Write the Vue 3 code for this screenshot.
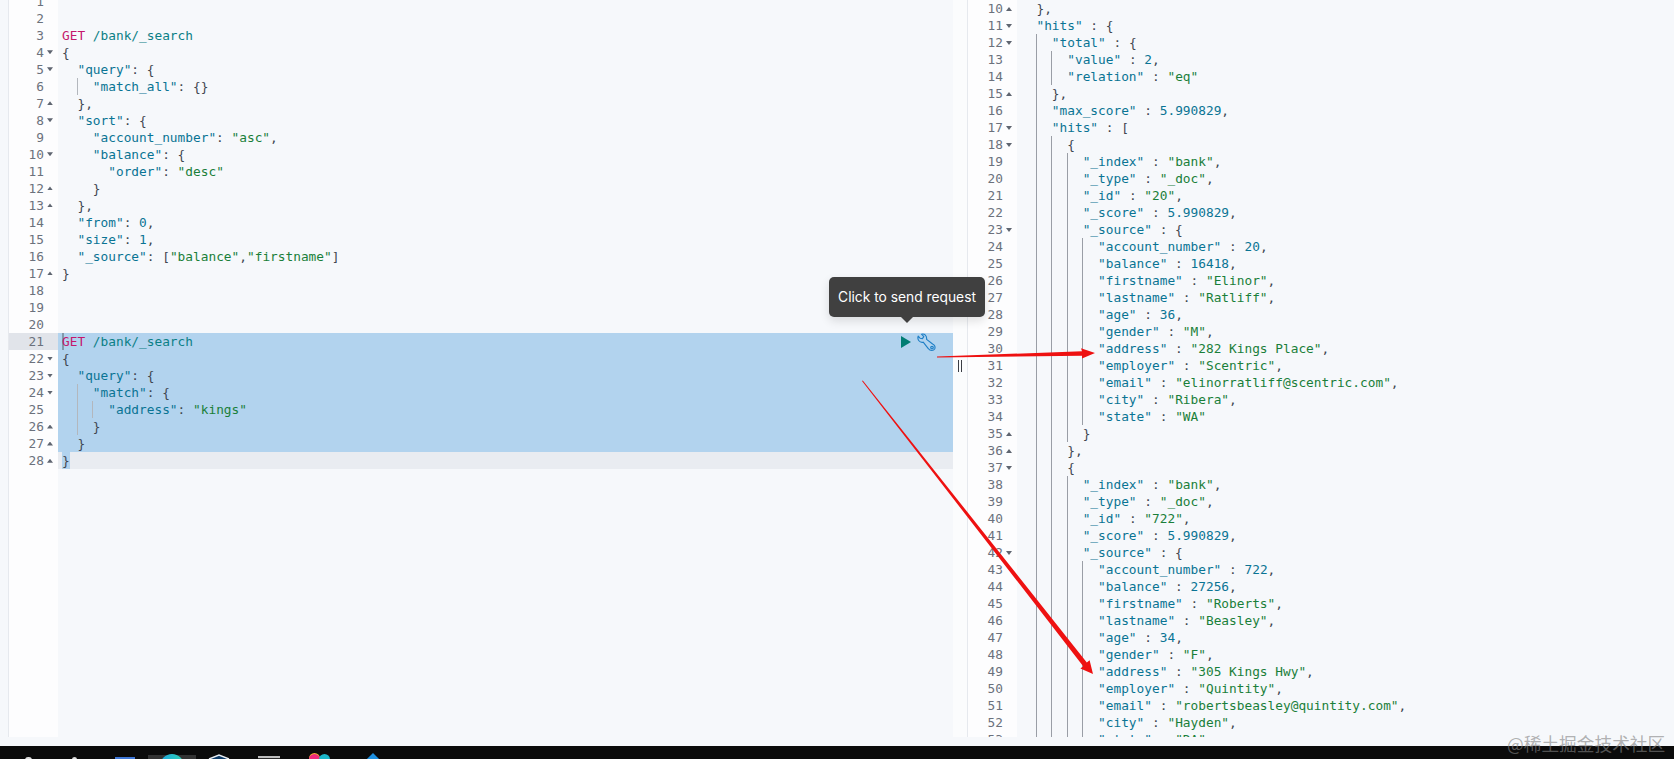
<script setup>
const tokenize = (s) => {
  const out = []
  const re = /("(?:[^"])*")(\s*:)?|(\b\d+(?:\.\d+)?\b)|([^"\d]+)/g
  let m
  while ((m = re.exec(s))) {
    if (m[1]) {
      out.push({ t: m[1], c: m[2] ? 'key' : 'str' })
      if (m[2]) out.push({ t: m[2], c: 'pun' })
    } else if (m[3]) out.push({ t: m[3], c: 'num' })
    else out.push({ t: m[4], c: 'pun' })
  }
  return out
}

const build = (rows, start, folds) =>
  rows.map((row, i) => {
    const n = start + i
    const text = row.s
    const indent = text.match(/^ */)[0].length
    const body = text.slice(indent)
    const tokens = body.startsWith('GET')
      ? [{ t: 'GET', c: 'method' }, { t: ' /bank/_search', c: 'url' }]
      : tokenize(body)
    return { n, indent, tokens, guides: row.g, fold: folds[n] || '' }
  })

const autoGuides = (s) => {
  const indent = s.match(/^ */)[0].length
  const g = []
  for (let c = 2; c < indent; c += 2) g.push(c)
  return g
}

const leftSrc = [
  '', '', 'GET /bank/_search', '{', '  "query": {', '    "match_all": {}', '  },', '  "sort": {',
  '    "account_number": "asc",', '    "balance": {', '      "order": "desc"', '    }', '  },',
  '  "from": 0,', '  "size": 1,', '  "_source": ["balance","firstname"]', '}', '', '', '',
  'GET /bank/_search', '{', '  "query": {', '    "match": {', '      "address": "kings"', '    }', '  }', '}'
]
const leftGuides = { 6: [2], 24: [2], 25: [2, 4], 26: [2] }
const leftRows = leftSrc.map((s, i) => ({ s, g: leftGuides[i + 1] || [] }))
const leftFolds = {
  4: 'd', 5: 'd', 7: 'u', 8: 'd', 10: 'd', 12: 'u', 13: 'u', 17: 'u',
  22: 'd', 23: 'd', 24: 'd', 26: 'u', 27: 'u', 28: 'u'
}
const leftLines = build(leftRows, 1, leftFolds)

const rightSrc = [
  '  },', '  "hits" : {', '    "total" : {', '      "value" : 2,', '      "relation" : "eq"', '    },',
  '    "max_score" : 5.990829,', '    "hits" : [', '      {',
  '        "_index" : "bank",', '        "_type" : "_doc",', '        "_id" : "20",', '        "_score" : 5.990829,',
  '        "_source" : {', '          "account_number" : 20,', '          "balance" : 16418,',
  '          "firstname" : "Elinor",', '          "lastname" : "Ratliff",', '          "age" : 36,',
  '          "gender" : "M",', '          "address" : "282 Kings Place",', '          "employer" : "Scentric",',
  '          "email" : "elinorratliff@scentric.com",', '          "city" : "Ribera",', '          "state" : "WA"',
  '        }', '      },', '      {',
  '        "_index" : "bank",', '        "_type" : "_doc",', '        "_id" : "722",', '        "_score" : 5.990829,',
  '        "_source" : {', '          "account_number" : 722,', '          "balance" : 27256,',
  '          "firstname" : "Roberts",', '          "lastname" : "Beasley",', '          "age" : 34,',
  '          "gender" : "F",', '          "address" : "305 Kings Hwy",', '          "employer" : "Quintity",',
  '          "email" : "robertsbeasley@quintity.com",', '          "city" : "Hayden",', '          "state" : "DA"'
]
const rightRows = rightSrc.map((s) => ({ s, g: autoGuides(s) }))
const rightFolds = { 10: 'u', 11: 'd', 12: 'd', 15: 'u', 17: 'd', 18: 'd', 23: 'd', 35: 'u', 36: 'u', 37: 'd', 42: 'd' }
const rightLines = build(rightRows, 10, rightFolds)

const isSelected = (n) => n >= 21 && n <= 27
</script>

<template>
  <div class="screen">
    <div class="workspace">
      <section class="pane pane-left">
        <div class="gutter">
          <div class="gutter-scroll left-scroll">
            <div v-for="l in leftLines" :key="l.n" class="gline" :class="{ 'gline-active': l.n === 21 }">
              <span class="num-label">{{ l.n }}</span>
              <span class="fold" :class="'fold-' + l.fold"></span>
            </div>
          </div>
        </div>
        <div class="code">
          <div class="code-scroll left-scroll">
            <div
              v-for="l in leftLines"
              :key="l.n"
              class="cline"
              :class="{ sel: isSelected(l.n), 'active-line': l.n === 28 }"
            >
              <span v-if="l.n === 28" class="sel-end"></span>
              <span v-if="l.n === 21" class="caret"></span>
              <span v-for="g in l.guides" :key="g" class="guide guide-soft" :style="{ left: g * 7.7 + 'px' }"></span>
              <span class="pre">{{ ' '.repeat(l.indent) }}</span><span
                v-for="(t, i) in l.tokens"
                :key="i"
                class="pre"
                :class="t.c"
              >{{ t.t }}</span>
            </div>
          </div>
          <div class="actions">
            <svg class="play" width="12" height="14" viewBox="0 0 12 14"><path d="M1 1 L11 7 L1 13 Z" fill="#017d73" /></svg>
            <svg class="wrench" width="19" height="19" viewBox="0 0 19 19" fill="none" stroke="#1f7fc6" stroke-width="1.15" stroke-linejoin="round">
              <path d="M4.5 1.2 L6.8 3.6 L5.4 5.6 L3 5.2 L1.2 3.2 C0 6.5 2.5 10 6.2 9.2 L11.5 15.8 C13 18 16.5 18 17.6 16 C18.6 14 17.6 11.8 15.6 11 L9.6 6.4 C10 3 7.6 .4 4.5 1.2 Z" />
              <circle cx="15" cy="14.6" r="1.3" />
            </svg>
          </div>
          <div class="tooltip">Click to send request</div>
        </div>
      </section>
      <div class="divider"><span class="grip"></span></div>
      <section class="pane pane-right">
        <div class="gutter">
          <div class="gutter-scroll right-scroll">
            <div v-for="l in rightLines" :key="l.n" class="gline">
              <span class="num-label">{{ l.n }}</span>
              <span class="fold" :class="'fold-' + l.fold"></span>
            </div>
          </div>
        </div>
        <div class="code">
          <div class="code-scroll right-scroll">
            <div v-for="l in rightLines" :key="l.n" class="cline">
              <span v-for="g in l.guides" :key="g" class="guide" :style="{ left: g * 7.7 + 'px' }"></span>
              <span class="pre">{{ ' '.repeat(l.indent) }}</span><span
                v-for="(t, i) in l.tokens"
                :key="i"
                class="pre"
                :class="t.c"
              >{{ t.t }}</span>
            </div>
          </div>
        </div>
      </section>
    </div>
    <div class="taskbar">
      <span class="tb tb-white1"></span>
      <span class="tb tb-white2"></span>
      <span class="tb tb-blue"></span>
      <span class="tb-active"><span class="tb-circle"></span></span>
      <svg class="tb-hex" width="22" height="6" viewBox="0 0 22 6"><path d="M1 5 L11 1 L21 5" fill="#0c3a66" stroke="#e8edf3" stroke-width="1.4" /></svg>
      <span class="tb tb-doc"></span>
      <span class="tb tb-multi"><i></i><i></i></span>
      <span class="tb tb-drop"></span>
    </div>
    <svg class="annot" width="1674" height="759" viewBox="0 0 1674 759">
      <polygon points="937,356.6 1082,351.2 1081,348.3 1095,353 1082,358.4 1082,355.8 937,357.6" fill="#ee1111" />
      <polygon points="862,381 862.8,380.4 1086.8,662.4 1089.6,660.2 1093,674 1080.4,668.4 1083.2,666.2" fill="#ee1111" />
    </svg>
    <div class="watermark">@稀土掘金技术社区</div>
  </div>
</template>

<style>
html, body { margin: 0; padding: 0; background: #f6f8fb; }
</style>

<style scoped>
.screen {
  position: relative;
  width: 1674px;
  height: 759px;
  overflow: hidden;
  background: #f6f8fb;
  display: flex;
  flex-direction: column;
  font-family: "DejaVu Sans Mono", "Liberation Mono", monospace;
  font-size: 12.8px;
}
.workspace {
  flex: 1;
  display: flex;
  min-height: 0;
  padding-bottom: 9px;
}
.pane {
  display: flex;
  position: relative;
  min-height: 0;
}
.pane-left {
  width: 945px;
  margin-left: 8px;
  z-index: 2;
}
.pane-right {
  flex: 1;
  overflow: hidden;
}
.divider {
  width: 14px;
  background: #fbfcfd;
  display: flex;
  justify-content: center;
  padding-top: 360px;
  box-sizing: border-box;
}
.grip {
  width: 4px;
  height: 12px;
  box-sizing: border-box;
  border-left: 1px solid #3a3d44;
  border-right: 1px solid #3a3d44;
}
.gutter {
  width: 50px;
  flex: none;
  box-sizing: border-box;
  background: #fdfdfe;
  border-left: 1px solid #e6e9ee;
  overflow: hidden;
}
.code {
  position: relative;
  flex: 1;
  min-width: 0;
}
.code-scroll {
  height: 100%;
}
.left-scroll > :first-child { margin-top: -7.3px; }
.right-scroll > :first-child { margin-top: 0.4px; }
.gline {
  height: 17.03px;
  line-height: 17.03px;
  color: #6b717c;
  display: flex;
  justify-content: flex-end;
  align-items: center;
  padding-right: 5px;
}
.pane-right .gline,
.pane-right .cline {
  height: 17px;
  line-height: 17px;
}
.gline-active { background: #e1e4ea; }
.num-label { margin-right: 3px; }
.fold {
  width: 6px;
  height: 4px;
  flex: none;
}
.fold-d { background: #5f6570; clip-path: polygon(0 0, 100% 0, 50% 100%); }
.fold-u { background: #5f6570; clip-path: polygon(50% 0, 100% 100%, 0 100%); }
.cline {
  position: relative;
  height: 17.03px;
  line-height: 17.03px;
  padding-left: 4px;
  white-space: pre;
  color: #343741;
}
.sel { background: #b2d3ee; }
.active-line { background: #e9ecf1; }
.sel-end {
  position: absolute;
  left: 4px;
  top: 0;
  width: 8px;
  height: 100%;
  background: #b2d3ee;
}
.caret {
  position: absolute;
  left: 4px;
  top: 0;
  width: 2px;
  height: 100%;
  background: #8298ab;
}
.pre { position: relative; white-space: pre; }
.guide {
  position: absolute;
  top: 0;
  bottom: 0;
  margin-left: 3.6px;
  width: 1px;
  background: #9a9ea6;
}
.guide-soft { background: #b3b7bd; }
.key { color: #0a7494; }
.str { color: #1a7f3a; }
.num { color: #0a7494; }
.pun { color: #3f4650; }
.method { color: #c4186c; }
.url { color: #0b7f86; }
.actions {
  position: absolute;
  left: 842px;
  top: 332.5px;
  display: flex;
  align-items: center;
  gap: 6px;
  height: 19px;
}
.play { display: block; }
.wrench { display: block; margin-left: -1px; }
.tooltip {
  position: absolute;
  left: 771px;
  top: 277px;
  box-sizing: border-box;
  width: 156px;
  height: 40px;
  background: #404040;
  color: #fff;
  border-radius: 5px;
  font-family: Inter, "Liberation Sans", sans-serif;
  font-size: 13.8px;
  line-height: 40px;
  text-align: center;
  white-space: nowrap;
  box-shadow: 0 4px 10px rgba(0, 0, 0, 0.12);
}
.tooltip::after {
  content: "";
  position: absolute;
  left: 72px;
  bottom: -6px;
  border-left: 6px solid transparent;
  border-right: 6px solid transparent;
  border-top: 6px solid #404040;
}
.taskbar {
  position: relative;
  flex: none;
  height: 13px;
  background: #0b0b0b;
  overflow: hidden;
}
.tb { position: absolute; display: block; }
.tb-white1 { left: 25px; top: 11px; width: 7px; height: 4px; background: #ddd; border-radius: 3px 3px 0 0; }
.tb-white2 { left: 72px; top: 11px; width: 5px; height: 4px; background: #ddd; border-radius: 3px 3px 0 0; }
.tb-blue { left: 115px; top: 11px; width: 20px; height: 4px; background: #3f78d8; }
.tb-active {
  position: absolute;
  left: 148px;
  top: 9px;
  width: 48px;
  height: 6px;
  background: #333;
}
.tb-circle {
  position: absolute;
  left: 12px;
  top: -1px;
  width: 24px;
  height: 24px;
  border-radius: 50%;
  background: linear-gradient(90deg, #1fa6e0, #2ed1b2);
}
.tb-hex { position: absolute; left: 208px; top: 8px; }
.tb-doc { left: 258px; top: 10px; width: 22px; height: 4px; box-sizing: border-box; border-top: 2px solid #bdbdbd; background: #2a2a2a; }
.tb-multi { left: 309px; top: 8px; width: 22px; height: 6px; }
.tb-multi i { position: absolute; top: 0; width: 11px; height: 11px; border-radius: 50%; }
.tb-multi i:first-child { left: 0; background: #ee2a7b; box-shadow: 0 -1px 0 #f9b234; }
.tb-multi i:last-child { left: 10px; background: #1bb6c9; }
.tb-drop { left: 368px; top: 9px; width: 10px; height: 10px; background: #1e90e0; transform: rotate(45deg); }
.annot {
  position: absolute;
  left: 0;
  top: 0;
  z-index: 3;
  pointer-events: none;
}
.watermark {
  position: absolute;
  left: 1507px;
  top: 732px;
  z-index: 4;
  font-family: "Noto Sans CJK SC", "Noto Sans", sans-serif;
  font-size: 17.7px;
  line-height: 22px;
  color: rgba(130, 130, 130, 0.62);
  white-space: nowrap;
}
</style>
